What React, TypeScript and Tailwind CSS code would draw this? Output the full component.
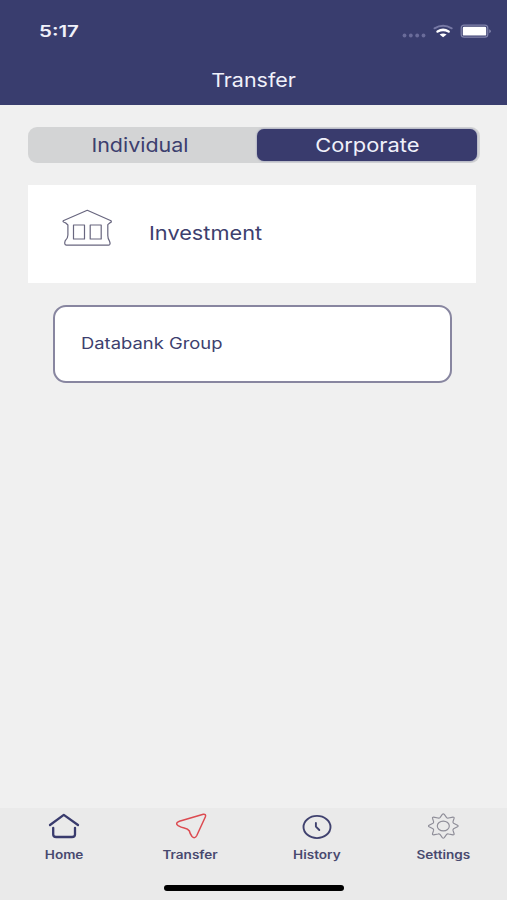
import type { ReactNode } from "react";

function StatusIcons() {
  return (
    <svg width="94" height="20" viewBox="400 21 94 20" fill="none" className="block">
      <g fill="#6a6c9a">
        <circle cx="404.5" cy="35.5" r="1.9" />
        <circle cx="410.8" cy="35.5" r="1.9" />
        <circle cx="417.2" cy="35.5" r="1.9" />
        <circle cx="423.5" cy="35.5" r="1.9" />
      </g>
      <path d="M434.5 28.3q8.6-5 17.2 0" stroke="#7779a5" strokeWidth="2" strokeLinecap="round" />
      <path d="M437.6 31.5q5.5-3.2 11 0" stroke="#fff" strokeWidth="2.6" strokeLinecap="round" />
      <path d="M439.6 34.4q3.5-1.6 7 0L443.1 37.2z" fill="#fff" />
      <rect x="461.2" y="25.2" width="26.6" height="12" rx="3" stroke="#8284ab" strokeWidth="1.2" />
      <rect x="462.8" y="26.8" width="23.4" height="8.8" rx="1.2" fill="#fff" />
      <path d="M489.2 29.2q3.6 2 0 4z" fill="#8284ab" />
    </svg>
  );
}

function BankIcon() {
  return (
    <svg width="52" height="40" viewBox="61 208 52 40" fill="none" stroke="#68667f" strokeWidth="1.2" strokeLinejoin="round" className="block">
      <path d="M87.3 210.3L111 220.7Q112 222 110 222.8L107.8 224.6V235.5Q107.8 238.5 109.4 240.8Q111 245 108.6 245.2H66.4Q63.8 244.8 65.2 240.8Q67.9 238.5 67.9 235V225L65.5 222.8Q62.3 222 63.2 220.8Z" />
      <rect x="73.5" y="225" width="11" height="14" />
      <rect x="90.2" y="225" width="11" height="14" />
    </svg>
  );
}

function HomeIcon() {
  return (
    <svg width="34" height="28" viewBox="47 812 34 28" fill="none" stroke="#393b6d" strokeWidth="2.3" strokeLinecap="round" strokeLinejoin="round">
      <path d="M50 825L63.8 814.9L78 825" />
      <path d="M53.2 827.8V834.5Q53.2 837 56.2 837H72Q75 837 75 834.5V827.8" />
    </svg>
  );
}

function TransferIcon() {
  return (
    <svg width="34" height="28" viewBox="174 812 34 28" fill="none" stroke="#dc4a50" strokeWidth="1.5" strokeLinejoin="round">
      <path d="M204.3 814.3Q207.3 814 206.4 816.8L197.8 835.5Q195.7 839.3 193 836.4Q191 834 190.4 831Q189 828.8 185.2 828Q182 827.6 179.1 825.7Q175.6 823 180.4 821.2Z" />
    </svg>
  );
}

function HistoryIcon() {
  return (
    <svg width="34" height="28" viewBox="300 812 34 28" fill="none" stroke="#40426f" strokeWidth="1.9" strokeLinecap="round" strokeLinejoin="round">
      <ellipse cx="317" cy="827" rx="13.5" ry="11.1" />
      <path d="M315.9 823V826.6L319.3 830" />
    </svg>
  );
}

function SettingsIcon() {
  return (
    <svg width="34" height="28" viewBox="426 812 34 28" fill="none" stroke="#8e8d98" strokeWidth="1.15" strokeLinejoin="round">
      <path d="M442.3 814.3Q443.3 813.3 444.3 814.3L446.6 817.6Q447.3 818.3 448.6 818L453 817.1Q454.3 817.1 454.1 818.2L453 821.6Q452.8 822.6 453.6 823.2L457.5 825.2Q458.7 826 457.5 826.8L453.6 828.8Q452.8 829.4 453 830.4L454.1 833.8Q454.3 834.9 453 834.9L448.6 834Q447.3 833.7 446.6 834.4L444.3 837.7Q443.3 838.7 442.3 837.7L440 834.4Q439.3 833.7 438 834L433.6 834.9Q432.3 834.9 432.5 833.8L433.6 830.4Q433.8 829.4 433 828.8L429.1 826.8Q427.9 826 429.1 825.2L433 823.2Q433.8 822.6 433.6 821.6L432.5 818.2Q432.3 817.1 433.6 817.1L438 818Q439.3 818.3 440 817.6Z" />
      <ellipse cx="443.3" cy="826" rx="6" ry="4.9" />
    </svg>
  );
}

function Tab({ icon, children }: { icon: ReactNode; children: ReactNode }) {
  return (
    <button className="flex w-[126.4px] flex-col items-center">
      {icon}
      <span className="mt-[6px] scale-x-[1.2] pt-[0.5px] text-[11.3px] leading-4 font-semibold text-[#48496f]">{children}</span>
    </button>
  );
}

export default function App() {
  return (
    <div className="flex h-[900px] w-[507px] flex-col overflow-hidden bg-[#f0f0f0] font-['Inter','Liberation_Sans',sans-serif] text-[#3d3f6e]">
      <header className="h-[105px] bg-[#393d6e] text-[#f0f1fa]">
        <div className="flex h-[62px] items-start justify-between pt-[21px] pr-[13px] pl-[39px]">
          <span className="origin-left scale-x-[1.28] text-[16px] leading-5 font-semibold">5:17</span>
          <StatusIcons />
        </div>
        <h1 className="flex h-9 items-center justify-center pt-[2px] text-[19px] font-normal">
          <span className="scale-x-[1.13]">Transfer</span>
        </h1>
      </header>

      <main className="flex-1">
        <div className="mt-[22px] ml-[28px] flex h-[36px] w-[452px] rounded-[9px] bg-[#d3d4d5] py-[2px] pr-[3px]">
          <button className="flex flex-1 items-center justify-center pt-[2px] pr-[5px] text-[19px]">
            <span className="scale-x-[1.13]">Individual</span>
          </button>
          <button className="flex w-[220px] items-center justify-center rounded-[7px] bg-[#393b6d] pt-[2px] text-[19px] text-[#f0f1fa] shadow-[0_0_2px_#7c7ea6]">
            <span className="scale-x-[1.15]">Corporate</span>
          </button>
        </div>

        <section className="mt-[22px] ml-[28px] flex h-[98px] w-[448px] bg-white pt-[23px] pl-[33px]">
          <BankIcon />
          <span className="mt-[14px] ml-[36px] h-6 origin-left scale-x-[1.145] text-[19px] leading-6">Investment</span>
        </section>

        <button className="mt-[22px] ml-[53px] flex h-[78px] w-[399px] items-center rounded-[13px] border-2 border-[#8886a0] bg-white pl-[26px]">
          <span className="origin-left scale-x-[1.18] text-[15.6px]">Databank Group</span>
        </button>
      </main>

      <footer className="flex h-[92px] flex-col items-center bg-[#eaeaea]">
        <nav className="flex h-[77px] w-full justify-center pt-[4px]">
          <Tab icon={<HomeIcon />}>Home</Tab>
          <Tab icon={<TransferIcon />}>Transfer</Tab>
          <Tab icon={<HistoryIcon />}>History</Tab>
          <Tab icon={<SettingsIcon />}>Settings</Tab>
        </nav>
        <div className="h-[6px] w-[180px] rounded-full bg-black" />
      </footer>
    </div>
  );
}
